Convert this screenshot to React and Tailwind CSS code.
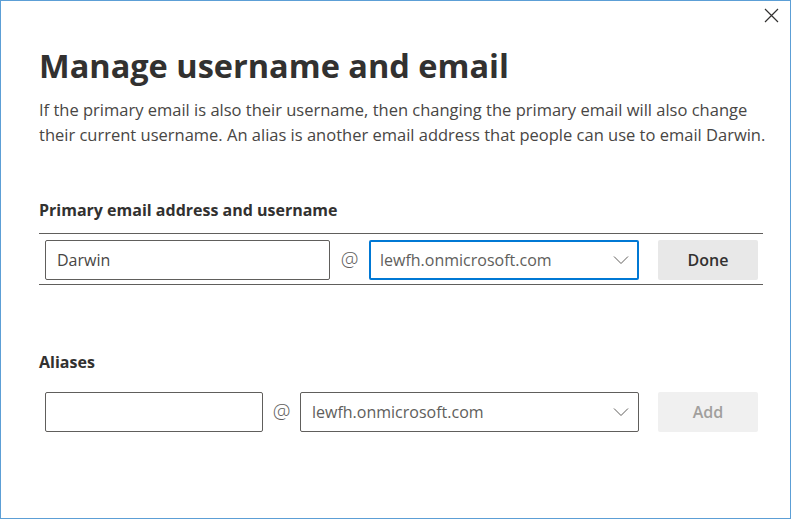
import React from 'react';

function Chevron() {
  return (
    <svg width="16" height="10" viewBox="0 0 16 10" fill="none" className="shrink-0">
      <path d="M1 1.5 L8 8.5 L15 1.5" stroke="#605e5c" strokeWidth="1" />
    </svg>
  );
}

function DomainSelect({ focused, className }) {
  return (
    <div
      className={`flex items-center justify-between h-10 rounded-[2px] text-[16px] text-[#605e5c] ${
        focused ? 'border-2 border-[#0078d4] pl-[9px] pr-[8px]' : 'border border-[#605e5c] pl-[11px] pr-[9px]'
      } ${className}`}
    >
      <span>lewfh.onmicrosoft.com</span>
      <Chevron />
    </div>
  );
}

export default function App() {
  return (
    <div
      className="w-[791px] h-[519px] border border-[#5c9fd6] bg-white text-[#323130] relative"
      style={{ fontFamily: '"Open Sans", "Noto Sans", sans-serif' }}
    >
      <button className="absolute right-[11px] top-[7px] p-0">
        <svg width="15" height="15" viewBox="0 0 15 15">
          <path d="M1 1 L14 14 M14 1 L1 14" stroke="#323130" strokeWidth="1.2" />
        </svg>
      </button>

      <div className="pl-[38px] pr-[26px] pt-[43px]">
        <h1 className="text-[32.5px] leading-[44px] font-bold">
          Manage username and email
        </h1>
        <p className="mt-[9px] text-[16.5px] leading-[25px] text-[#484644] whitespace-nowrap">
          If the primary email is also their username, then changing the primary email will also change
          <br />
          their current username. An alias is another email address that people can use to email Darwin.
        </p>

        <h2 className="mt-[52px] text-[16px] leading-[22px] font-bold">
          Primary email address and username
        </h2>
        <div className="mt-[12px] w-[724px] border-t border-b border-[#605e5c] flex items-center pl-[6px] pt-[6px] pb-[4px]">
          <div className="w-[285px] h-10 border border-[#605e5c] rounded-[2px] flex items-center pl-[11px] text-[16px] text-[#484644]">
            Darwin
          </div>
          <span className="w-[39px] text-center text-[20px] font-light text-[#605e5c]">@</span>
          <DomainSelect focused className="w-[270px]" />
          <button className="ml-[19px] w-[100px] h-10 rounded-[2px] bg-[#e8e8e8] text-[16px] font-semibold text-[#323130]">
            Done
          </button>
        </div>

        <h2 className="mt-[66px] text-[16px] leading-[22px] font-bold">
          Aliases
        </h2>
        <div className="mt-[19px] flex items-center pl-[6px]">
          <div className="w-[218px] h-10 border border-[#605e5c] rounded-[2px]" />
          <span className="w-[37px] text-center text-[20px] font-light text-[#605e5c]">@</span>
          <DomainSelect className="w-[339px]" />
          <button className="ml-[19px] w-[100px] h-10 rounded-[2px] bg-[#f0f0f0] text-[16px] font-semibold text-[#a19f9d]">
            Add
          </button>
        </div>
      </div>
    </div>
  );
}
